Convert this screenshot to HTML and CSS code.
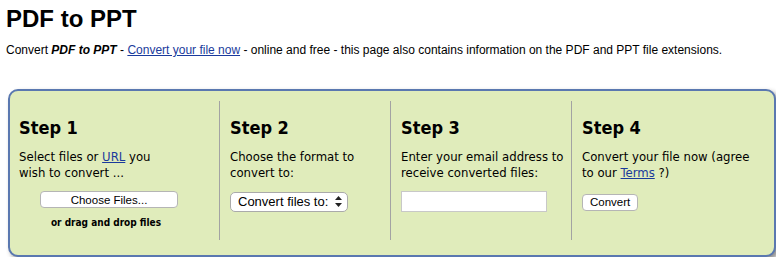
FILE: index.html
```html
<!DOCTYPE html>
<html lang="en">
<head>
    <meta charset="UTF-8">
    <title>PDF to PPT</title>
    <link rel="stylesheet" href="styles.css">
</head>
<body>
    <h1>PDF to PPT</h1>
    <p class="intro">Convert <b><i>PDF to PPT</i></b> - <a href="#">Convert your file now</a> - online and free - this page also contains information on the PDF and PPT file extensions.</p>

    <form class="converter" onsubmit="return false">
        <div class="step step-first">
            <h2>Step 1</h2>
            <p class="step-text narrow">Select files or <a href="#">URL</a> you wish to convert ...</p>
            <div class="upload">
                <button type="button" class="btn btn-wide">Choose Files...</button>
                <span class="drop-hint">or drag and drop files</span>
            </div>
        </div>
        <div class="step">
            <h2>Step 2</h2>
            <p class="step-text">Choose the format to convert to:</p>
            <div class="select-wrap">
                <select class="format-select">
                    <option>Convert files to:</option>
                </select>
                <svg class="select-arrows" width="7" height="11" viewBox="0 0 7 11">
                    <path d="M3.5 0 L7 4 L0 4 Z M0 7 L7 7 L3.5 11 Z" fill="#222"/>
                </svg>
            </div>
        </div>
        <div class="step">
            <h2>Step 3</h2>
            <p class="step-text">Enter your email address to receive converted files:</p>
            <input type="text" class="email-input">
        </div>
        <div class="step">
            <h2>Step 4</h2>
            <p class="step-text">Convert your file now (agree to our <a href="#">Terms</a> ?)</p>
            <div>
                <button type="submit" class="btn">Convert</button>
            </div>
        </div>
    </form>
</body>
</html>
```

FILE: styles.css
```css
body {
    margin: 5px 8px 8px 6px;
    font-family: 'Liberation Sans', Arial, sans-serif;
    color: #000;
    background-color: #fff;
}

a {
    color: #1a3a9c;
}

h1 {
    margin: 0;
    font-size: 24px;
    font-weight: bold;
}

.intro {
    margin: 10px 0 0;
    font-size: 12px;
    line-height: 15px;
    white-space: nowrap;
}

/* Converter box */
.converter {
    display: grid;
    grid-template-columns: 209px 171px 181px 1fr;
    margin: 31px 0 0 2px;
    padding: 10px 0 15px;
    background-color: #e0ecbb;
    border: 2px solid #5a78b0;
    border-radius: 10px;
    box-shadow: 3px 3px 5px rgba(0, 0, 0, 0.45);
    font-family: 'DejaVu Sans Condensed', 'DejaVu Sans', sans-serif;
}

.step {
    padding: 0 2px 12px 10px;
    border-left: 1px solid #a3a3a3;
}

.step.step-first {
    padding-left: 9px;
    border-left: none;
}

.step h2 {
    margin: 16px 0 10px;
    font-size: 18px;
    line-height: 22px;
    font-weight: bold;
}

.step-text {
    max-width: 174px;
    margin: 0 0 10px;
    font-size: 13px;
    line-height: 16px;
}

.step-text.narrow {
    max-width: 150px;
}

/* Controls */
.btn {
    height: 17px;
    padding: 0 7px;
    font-family: 'Liberation Sans', Arial, sans-serif;
    font-size: 11.5px;
    color: #000;
    background-color: #fff;
    border: 1px solid #b5b5b5;
    border-radius: 4px;
}

.upload {
    width: 180px;
    display: flex;
    flex-direction: column;
    align-items: center;
    gap: 9px;
}

.btn-wide {
    width: 138px;
}

.drop-hint {
    font-size: 10px;
    font-weight: bold;
    margin-right: 6px;
}

.select-wrap {
    position: relative;
    width: 118px;
}

.format-select {
    width: 118px;
    height: 20px;
    padding: 0 0 0 7px;
    appearance: none;
    font-family: 'Liberation Sans', Arial, sans-serif;
    font-size: 13px;
    color: #000;
    background-color: #fff;
    border: 1px solid #aaa;
    border-radius: 5px;
}

.select-arrows {
    position: absolute;
    right: 6px;
    top: 5px;
}

.email-input {
    width: 146px;
    height: 21px;
    box-sizing: border-box;
    margin: 0;
    background-color: #fff;
    border: 1px solid #c8c8c8;
}
```
